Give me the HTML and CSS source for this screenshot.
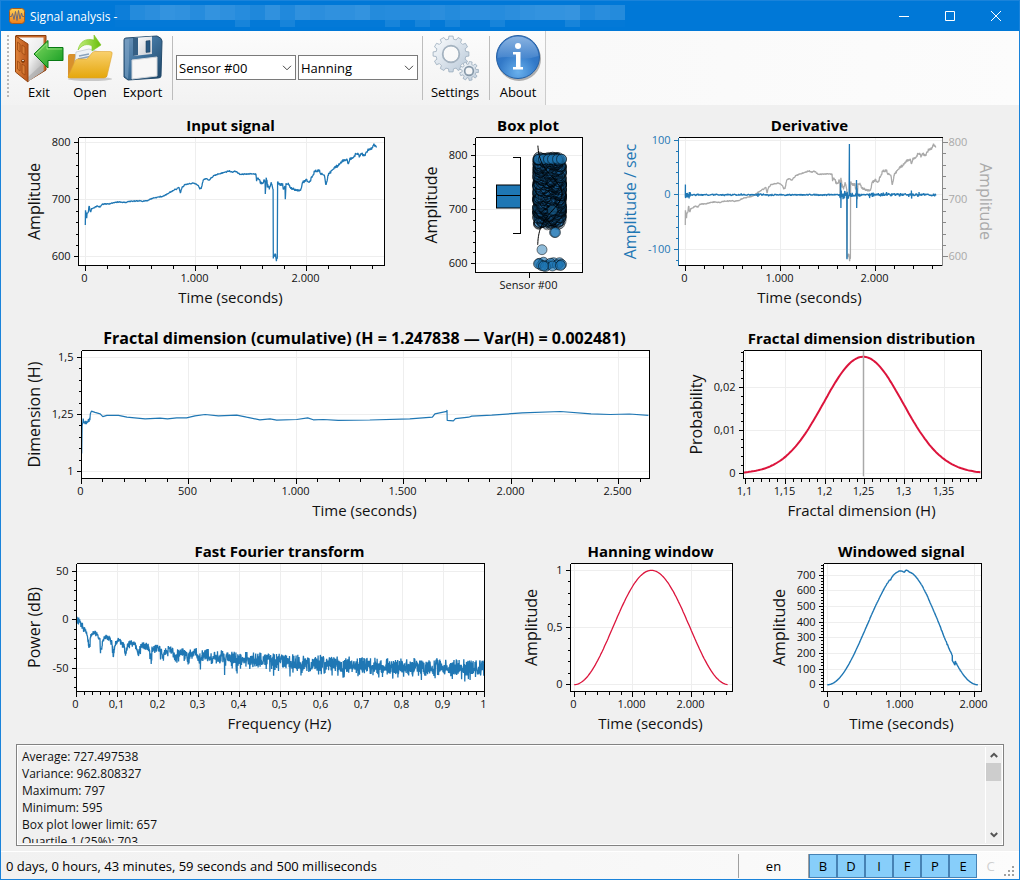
FILE: index.html
```html
<!DOCTYPE html>
<html lang="en">
<head>
<meta charset="utf-8">
<title>Signal analysis</title>
<link rel="stylesheet" href="styles.css">
</head>
<body>
<div class="window">
  <header class="titlebar">
    <svg class="app-icon" viewBox="0 0 16 16" aria-hidden="true">
      <defs><linearGradient id="appg" x1="0" y1="0" x2="0" y2="1"><stop offset="0" stop-color="#ffd257"/><stop offset="1" stop-color="#f0801c"/></linearGradient></defs>
      <rect x=".5" y=".5" width="15" height="15" rx="3" fill="url(#appg)" stroke="#a85a1c"/>
      <path d="M1 8.500h1.500l1-3 1.500 6 1.500-8 1.500 9 1.500-10 1.500 8.500 1.500-6 1 3.500H15" fill="none" stroke="#6d6a78" stroke-width="1"/>
    </svg>
    <h1 class="caption">Signal analysis -</h1>
    <div class="mosaic" id="mosaic" aria-hidden="true"></div>
    <div class="window-buttons">
      <button aria-label="Minimize"><svg viewBox="0 0 10 10"><path d="M0 5.500H10"/></svg></button>
      <button aria-label="Maximize"><svg viewBox="0 0 10 10"><path d="M.5.5h9v9h-9z"/></svg></button>
      <button aria-label="Close"><svg viewBox="0 0 10 10"><path d="M0 0L10 10M10 0L0 10"/></svg></button>
    </div>
  </header>

  <div class="toolbar-area">
    <div class="toolbar" role="toolbar" aria-label="Main">
      <span class="grip"></span>
      <button class="tool">
        <svg viewBox="0 0 50 48">
          <defs>
            <linearGradient id="dw" x1="0" y1="0" x2="1" y2="1"><stop offset="0" stop-color="#fff"/><stop offset=".5" stop-color="#eee"/><stop offset="1" stop-color="#999"/></linearGradient>
            <linearGradient id="dd" x1="0" y1="0" x2="1" y2="0"><stop offset="0" stop-color="#e0853c"/><stop offset="1" stop-color="#b9541a"/></linearGradient>
            <linearGradient id="ga" x1="0" y1="0" x2="1" y2="1"><stop offset="0" stop-color="#80d860"/><stop offset="1" stop-color="#109a20"/></linearGradient>
          </defs>
          <path d="M2 .5H32V35L14 46z" fill="#c8692a" stroke="#8a3d0c"/>
          <path d="M5 2.500H29.500V36L14 46.500z" fill="url(#dw)"/>
          <path d="M14 42L29.500 28V36L14 46.500z" fill="#aaa" opacity=".6"/>
          <path d="M1.500 1L14 9V47L1.500 37z" fill="url(#dd)" stroke="#95450f"/>
          <path d="M3.500 7L6 9v8l-2.500-2zM8 10l3 2v8l-3-2zM3.500 26L6 28v8l-2.500-2zM8 29l3 2v9l-3-2z" fill="#d97c35" stroke="#9c4a12" stroke-width=".8"/>
          <circle cx="9" cy="26" r="1.800" fill="#713000"/><circle cx="9" cy="25.500" r=".8" fill="#fff"/>
          <path d="M20 19L34 5.500V12.500H49V25.500H34V33z" fill="url(#ga)" stroke="#087a14"/>
          <path d="M22 19L33 8.500V14H48" fill="none" stroke="#a6eb8c" opacity=".7"/>
        </svg><span>Exit</span>
      </button>
      <button class="tool tool-open">
        <svg viewBox="0 0 48 48">
          <defs><linearGradient id="fo" x1="0" y1="0" x2="0" y2="1"><stop offset="0" stop-color="#f9d06d"/><stop offset="1" stop-color="#e5a70c"/></linearGradient>
          <linearGradient id="gr" x1="0" y1="0" x2="1" y2="0"><stop offset="0" stop-color="#c6ef80"/><stop offset="1" stop-color="#67bd0a"/></linearGradient></defs>
          <ellipse cx="24" cy="44" rx="22" ry="2" fill="#aaa" opacity=".6"/>
          <path d="M2 43V21q0-2 2-2h5l4 3h28v20z" fill="#d8912c"/>
          <path d="M10 17l13-3 14 4-2 16H8z" fill="#eef2f6" stroke="#bcc5d0" stroke-width=".7"/>
          <path d="M13 21l10-2M12 24l14-3M12 27l17-4M26 19l7 1M26 24h8" stroke="#8aa2bc" stroke-width="1.400"/>
          <path d="M2 42L9 26q1-2 3-2h9l5-6q1-1.500 3-1.500h15q3 0 2 3L41 41q-1 2-3 2H4q-2 0-2-1z" fill="url(#fo)" stroke="#dda330" stroke-width=".6"/>
          <path d="M12 15C14 6 20 3 28 5V0l7 10-9 6v-5C21 8 16 10 12 15z" fill="url(#gr)" stroke="#79c51e" stroke-width=".6"/>
        </svg><span>Open</span>
      </button>
      <button class="tool tool-export">
        <svg viewBox="0 0 48 48">
          <defs><linearGradient id="fl" x1="0" y1="0" x2="1" y2="1"><stop offset="0" stop-color="#7298bd"/><stop offset=".45" stop-color="#40739e"/><stop offset="1" stop-color="#1c4465"/></linearGradient>
          <linearGradient id="fm" x1="0" y1="0" x2="1" y2="1"><stop offset="0" stop-color="#fff"/><stop offset="1" stop-color="#c8cdd4"/></linearGradient></defs>
          <path d="M5 5Q5 3 7 3L38 1Q43 3 43 6L42 41Q42 43 39 43L9 45 5 42z" fill="url(#fl)" stroke="#244b6c"/>
          <path d="M14 3L33 1.500V19L14 21z" fill="url(#fm)"/><path d="M14 3l5-.4V20l-5 1z" fill="#355f84"/>
          <path d="M27 6l4-.4V17l-4 .4z" fill="#285780" stroke="#1c3f60" stroke-width=".6"/>
          <path d="M13 25L38 22V41L13 44z" fill="#f7f7f7" stroke="#d0d5da"/>
          <path d="M6 5L6 41L9 44L10 27V4z" fill="#7ba2c5" opacity=".6"/>
        </svg><span>Export</span>
      </button>
      <span class="sep"></span>
      <div class="combo"><select aria-label="Sensor"><option>Sensor #00</option></select><svg viewBox="0 0 10 6"><path d="M1 .8L5 4.800 9 .8"/></svg></div>
      <div class="combo"><select aria-label="Window function"><option>Hanning</option></select><svg viewBox="0 0 10 6"><path d="M1 .8L5 4.800 9 .8"/></svg></div>
      <span class="sep"></span>
      <button class="tool tool-settings">
        <svg viewBox="0 0 48 48">
          <defs><linearGradient id="ge" x1="0" y1="0" x2="1" y2="1"><stop offset="0" stop-color="#fdfeff"/><stop offset="1" stop-color="#b8c8d8"/></linearGradient></defs>
          <g stroke="#9aacbc" fill="url(#ge)">
            <path id="gear-big" stroke-width=".8" fill-rule="evenodd"/>
            <circle cx="20" cy="19" r="8.500" fill="none" stroke="#a4b2bf" stroke-width="1.400"/>
            <path id="gear-small" stroke-width=".8" fill-rule="evenodd"/>
            <circle cx="38" cy="36" r="4.500" fill="none" stroke="#8496a6" stroke-width="1.300"/>
          </g>
        </svg><span>Settings</span>
      </button>
      <span class="sep"></span>
      <button class="tool tool-about">
        <svg viewBox="0 0 48 48">
          <defs><radialGradient id="ab" cx=".5" cy=".85" r=".9"><stop offset="0" stop-color="#69b0ec"/><stop offset=".5" stop-color="#3279c8"/><stop offset="1" stop-color="#2f6ebd"/></radialGradient>
          <linearGradient id="as" x1="0" y1="0" x2="0" y2="1"><stop offset="0" stop-color="#a8c9ec"/><stop offset="1" stop-color="#4a88cf"/></linearGradient></defs>
          <circle cx="25" cy="24" r="22" fill="#666" opacity=".5"/>
          <circle cx="24" cy="22" r="21.500" fill="url(#ab)" stroke="#2560a4"/>
          <path d="M3.500 23A20.500 20.500 0 0 1 44.500 21Q33 25 24 23 12 21 3.500 23z" fill="url(#as)" opacity=".75"/>
          <circle cx="24" cy="11" r="3" fill="#fff"/><path d="M19 17h7.500v15H29v2.500H19V32h3V19.500h-3z" fill="#fff"/>
        </svg><span>About</span>
      </button>
    </div>
  </div>

  <main class="charts">
    <div class="row row-a">
      <figure class="chart" data-chart="input" aria-label="Input signal"></figure>
      <figure class="chart" data-chart="box" aria-label="Box plot"></figure>
      <figure class="chart" data-chart="derivative" aria-label="Derivative"></figure>
    </div>
    <div class="row row-b">
      <figure class="chart" data-chart="fractal" aria-label="Fractal dimension"></figure>
      <figure class="chart" data-chart="distribution" aria-label="Fractal dimension distribution"></figure>
    </div>
    <div class="row row-c">
      <figure class="chart" data-chart="fft" aria-label="Fast Fourier transform"></figure>
      <figure class="chart" data-chart="hanning" aria-label="Hanning window"></figure>
      <figure class="chart" data-chart="windowed" aria-label="Windowed signal"></figure>
    </div>
  </main>

  <section class="results">
    <textarea readonly aria-label="Results">Average: 727.497538
Variance: 962.808327
Maximum: 797
Minimum: 595
Box plot lower limit: 657
Quartile 1 (25%): 703</textarea>
    <div class="scrollbar">
      <button aria-label="Scroll up"><svg viewBox="0 0 8 6"><path d="M.8 5L4 1.800 7.200 5"/></svg></button>
      <span class="thumb"></span>
      <button class="down" aria-label="Scroll down"><svg viewBox="0 0 8 6"><path d="M.8 1L4 4.200 7.200 1"/></svg></button>
    </div>
  </section>

  <footer class="statusbar">
    <span class="elapsed">0 days, 0 hours, 43 minutes, 59 seconds and 500 milliseconds</span>
    <button class="lang">en</button>
    <div class="flags">
      <button>B</button><button>D</button><button>I</button><button>F</button><button>P</button><button>E</button>
    </div>
    <button class="flag-off" disabled>C</button>
    <svg class="size-grip" viewBox="0 0 12 12" aria-hidden="true"><path d="M8 0h2v2h-2zM4 4h2v2h-2zM8 4h2v2h-2zM0 8h2v2h-2zM4 8h2v2h-2zM8 8h2v2h-2z"/></svg>
  </footer>
</div>
<script src="charts.js"></script>
</body>
</html>
```

FILE: styles.css
```css
* { box-sizing: border-box; }
body { margin: 0; background: #f0f0f0; color: #000; font: 13px "Open Sans", "Noto Sans", sans-serif; }
button { border: 0; padding: 0; background: none; font: inherit; color: inherit; }
.window { display: flex; flex-direction: column; min-height: 100vh; border: 1px solid #1a83da; border-top: 0; }

.titlebar { display: flex; align-items: center; height: 31px; background: #0078d7; border-top: 1px solid #1a83da; color: #fff; }
.app-icon { width: 16px; height: 16px; margin: 0 5px 0 8px; }
.caption { margin: 0; font-size: 12px; font-weight: 400; white-space: pre; }
.mosaic { display: grid; grid-template-columns: repeat(34, 15px); grid-template-rows: 15px 7px; align-self: flex-start; margin: 4px 0 0 -2px; }
.window-buttons { display: flex; margin-left: auto; }
.window-buttons button { width: 46px; height: 30px; display: grid; place-items: center; }
.window-buttons svg { width: 10px; height: 10px; overflow: visible; fill: none; stroke: #fff; }

.toolbar-area { display: flex; height: 74px; background: linear-gradient(90deg, #f5f5f5, #fcfcfc); }
.toolbar { display: flex; align-items: flex-start; height: 74px; padding: 4px 2px 0 6px; background: linear-gradient(#fcfcfc, #f2f2f2); border-right: 1px solid #ccc; }
.grip { width: 2px; height: 63px; margin-right: 5px; background: repeating-linear-gradient(#b8b8b8 0 2px, transparent 2px 4px); }
.tool { display: flex; flex-direction: column; align-items: center; width: 50px; }
.tool svg { display: block; width: 50px; height: 48px; }
.tool span { font-size: 13px; line-height: 18px; }
.tool-open { width: 52px; }
.tool-open svg, .tool-export svg, .tool-settings svg, .tool-about svg { width: 48px; }
.tool-export { width: 53px; }
.tool-settings { width: 58px; margin-right: 2px; }
.sep { width: 1px; height: 64px; margin: 1px 3px; background: #bdbdbd; }
.combo { position: relative; width: 120px; height: 25px; margin: 20px 2px 0 0; }
.combo + .sep { margin-left: 2px; }
.combo select { width: 100%; height: 100%; appearance: none; border: 1px solid #7a7a7a; border-radius: 0; background: #fff; color: #000; padding: 0 2px; font: 13px "Open Sans", "Noto Sans", sans-serif; }
.combo svg { position: absolute; right: 4px; top: 10px; width: 10px; height: 6px; fill: none; stroke: #444; pointer-events: none; }

.charts { display: flex; flex: 1; flex-direction: column; padding: 0 10px 0 15px; }
.row { display: grid; flex: 1; min-height: 213px; }
.row-a { grid-template-columns: 2fr 1fr 2fr; }
.row-b { grid-template-columns: 2fr 1fr; }
.row-c { grid-template-columns: 2fr 1fr 1fr; }
.chart { margin: 0; min-width: 0; overflow: hidden; }
.chart svg { display: block; width: 100%; height: 100%; }
.chart text { fill: #111; text-anchor: middle; }
.chart .title { font-size: 15px; font-weight: 700; fill: #000; }
.chart .title-long { font-size: 16px; }
.chart .label { font-size: 15px; }
.chart .side { font-size: 16px; }
.chart .tick { font-size: 11px; }
.chart .end { text-anchor: end; }
.chart .start { text-anchor: start; }
.chart .blue { fill: #1f77b4; }
.chart .gray { fill: #a9a9a9; }

.results { display: flex; height: 102px; margin: 0 15px; border: 1px solid #828282; padding: 2px 1px 2px 1px; background: #f0f0f0; box-shadow: inset 0 0 0 1px #fff; }
.results textarea { flex: 1; resize: none; border: 0; outline: 0; overflow: hidden; padding: 1px 4px; background: transparent; color: #111; font: 12px/17px "Open Sans", "Noto Sans", sans-serif; }
.scrollbar { display: flex; flex-direction: column; width: 17px; border-left: 1px solid #fff; padding-right: 1px; }
.scrollbar button { height: 16px; display: grid; place-items: center; }
.scrollbar svg { width: 8px; height: 6px; fill: none; stroke: #555; stroke-width: 2; }
.thumb { height: 18px; background: #cdcdcd; }
.scrollbar .down { margin-top: auto; }

.statusbar { display: flex; align-items: center; height: 28px; margin-top: 5px; border-top: 1px solid #fff; padding: 2px 3px 1px 5px; background: linear-gradient(90deg, #f1f1f1, #fcfcfc); }
.elapsed { margin-right: auto; }
.lang { width: 70px; height: 24px; border-left: 1px solid #a0a0a0; }
.flags { display: flex; border-left: 1px solid #a0a0a0; }
.flags button { width: 28px; height: 24px; border: 1px solid #4682b4; background: #87cefa; }
.flag-off { width: 27px; color: #d0d0d0; }
.size-grip { width: 12px; height: 12px; align-self: flex-end; fill: #a0a0a0; }
```

FILE: charts.js
```js
const BLUE = '#1f77b4', GRAY = '#a9a9a9', RED = '#dc143c', BLACK = '#000';

function random(seed) {
  let s = seed;
  return () => { s = (s * 1664525 + 1013904223) % 4294967296; return s / 4294967296; };
}
function range(a, b, step) {
  const out = [];
  for (let i = Math.ceil(a / step - 1e-9); i * step <= b + 1e-9; i++) out.push(+(i * step).toFixed(6));
  return out;
}
function interpolate(pts, x) {
  let i = 1;
  while (i < pts.length - 1 && pts[i][0] < x) i++;
  const [x0, y0] = pts[i - 1], [x1, y1] = pts[i];
  return x1 === x0 ? y1 : y0 + (y1 - y0) * (x - x0) / (x1 - x0);
}
const format = v => Math.abs(v) >= 1000 ? (v / 1000).toFixed(3) : String(v).replace('.', ',');

const signalKeys = [[0,658],[1,678],[12,671],[24,681],[36,685],[48,678],[60,684],[109,689],[133,687],[151,692],[223,693],[299,696],[359,695],[404,697],[555,698],[615,703],[706,706],[766,713],[848,721],[860,712],[875,721],[902,726],[977,729],[1023,725],[1035,719],[1050,720],[1068,735],[1092,737],[1119,734],[1158,741],[1204,745],[1249,747],[1300,750],[1333,748],[1357,750],[1400,744],[1475,745],[1541,745],[1550,735],[1566,738],[1587,730],[1626,733],[1629,712],[1638,741],[1647,725],[1665,719],[1683,727],[1700,721],[1701,600],[1710,600],[1722,605],[1729,595],[1738,595],[1740,728],[1786,726],[1798,716],[1807,724],[1810,700],[1816,729],[1837,728],[1867,719],[1897,717],[1943,716],[1973,731],[2003,735],[2024,729],[2048,738],[2078,750],[2118,751],[2127,744],[2160,745],[2178,727],[2199,743],[2244,754],[2290,760],[2329,768],[2365,771],[2380,764],[2395,771],[2431,776],[2465,781],[2480,775],[2500,781],[2525,776],[2561,787],[2591,789],[2612,796],[2636,793]];

function makeSignal() {
  const r = random(7);
  const times = new Set(signalKeys.map(k => k[0]));
  for (let t = 0; t < 2636; t += 4) times.add(t);
  return [...times].sort((a, b) => a - b).map(t => {
    const amp = t < 60 ? 8 : t > 1820 ? 5 : t > 1540 ? 7 : 2;
    return [t, interpolate(signalKeys, t) + (r() - .5) * amp];
  });
}
const signal = makeSignal();

function makeDerivative() {
  const r = random(19), out = [];
  for (let t = 0; t <= 2636; t += 4) {
    const amp = t < 60 ? 10 : t > 1625 && t < 1720 ? 14 : t > 1720 && t < 1840 ? 8 : t > 1930 ? (r() > .8 ? 8 : 5) : (r() > .93 ? 6 : 3);
    out.push([t, (r() - .5) * amp]);
  }
  const spikes = [[0.5,19],[1,-5],[40,-7],[42,5],[764,-4],[766,3],[1634,22],[1638,-24],[1642,8],[1660,-8],[1699,2],[1702,-118],[1705,3],[1724,0],[1727,93],[1731,0],[1802,27],[1804,-24],[1807,12],[1940,-6],[2118,5],[2380,8],[2382,-7],[2460,5]];
  return out.concat(spikes).sort((a, b) => a[0] - b[0]);
}

const fractalKeys = [[1,1.08],[3,1.2],[6,1.215],[8,1.232],[11,1.212],[14,1.22],[17,1.208],[20,1.222],[23,1.208],[26,1.22],[29,1.214],[32,1.23],[35,1.217],[37,1.235],[39,1.225],[41,1.252],[46,1.265],[63,1.259],[87,1.253],[99,1.241],[118,1.246],[172,1.246],[211,1.238],[296,1.231],[365,1.234],[400,1.231],[443,1.235],[489,1.235],[528,1.244],[575,1.25],[637,1.244],[722,1.247],[768,1.238],[830,1.227],[877,1.231],[908,1.225],[1001,1.228],[1052,1.235],[1078,1.227],[1125,1.228],[1194,1.224],[1341,1.226],[1527,1.231],[1632,1.238],[1644,1.253],[1699,1.264],[1700,1.27],[1701,1.224],[1730,1.222],[1739,1.232],[1801,1.238],[1815,1.243],[1908,1.247],[2050,1.257],[2228,1.263],[2370,1.253],[2459,1.25],[2548,1.252],[2637,1.246]];
const bell = [];
for (let x = 1.097; x <= 1.397; x += .002) bell.push([x, .0271 * Math.exp(-((x - 1.2478) ** 2) / (2 * .0498 ** 2))]);

function makeSpectrum() {
  const r = random(41), out = [];
  const top = [[0,5],[.01,0],[.022,-8],[.035,-11],[.07,-15],[.1,-19],[.14,-21],[.2,-25],[.26,-28],[.32,-30],[.4,-32],[.6,-36],[.75,-39],[1,-40]];
  for (let f = 0; f <= 1; f += .0006) {
    const lobe = f < .02 ? 0 : 20 * Math.log10(Math.abs(Math.sin(Math.PI * f / .0303)) + .16);
    const weight = Math.max(0, 1 - f / .48);
    const n = -Math.log(r() + .001);
    const spread = 3 + 12 * Math.min(1, f / .55);
    const noise = f < .02 ? 8 * r() : spread * r() + Math.min(18, n * (Math.min(2.6, 6 * f + .3) + (lobe < -7 ? 3.5 * weight : 0)));
    out.push([f, interpolate(top, f) + lobe * weight - noise]);
  }
  return out;
}
const hann = (t, n) => (1 - Math.cos(2 * Math.PI * t / n)) / 2;

const timeTicks = { major: 1000, minor: 200, label: 'Time (seconds)' };
const charts = {
  input: { title: 'Input signal', left: 62, right: 29, x: { ...timeTicks, domain: [-62, 2708] }, y: { domain: [585, 808.5], major: 100, minor: 20, label: 'Amplitude' },
    series: [{ color: BLUE, width: 1.3, data: signal }] },
  box: { title: 'Box plot', left: 62, right: 30, bottom: 46, category: 'Sensor #00', x: { domain: [0, 107] }, y: { domain: [584, 833], major: 100, minor: 20, label: 'Amplitude' }, series: [] },
  derivative: { title: 'Derivative', left: 66, right: 67, x: { ...timeTicks, domain: [-72, 2707] }, y: { domain: [-129.5, 105], major: 100, minor: 20, label: 'Amplitude / sec', color: BLUE, css: 'blue' },
    y2: { domain: [585, 808.5], major: 100, minor: 20, label: 'Amplitude' },
    series: [{ color: GRAY, width: 1.3, data: signal, second: true }, { color: BLUE, width: 1.3, data: makeDerivative() }] },
  fractal: { title: 'Fractal dimension (cumulative) (H = 1.247838 \u2014 Var(H) = 0.002481)', titleCss: 'title-long', left: 65, right: 29, x: { domain: [0, 2642], major: 500, minor: 100, label: 'Time (seconds)' }, y: { domain: [.97, 1.53], major: .25, minor: .05, label: 'Dimension (H)' },
    series: [{ color: BLUE, width: 1.2, data: fractalKeys }] },
  distribution: { title: 'Fractal dimension distribution', left: 65, right: 28, x: { domain: [1.0974, 1.3964], major: .05, minor: .01, label: 'Fractal dimension (H)' }, y: { domain: [-.0011, .02855], major: .01, minor: .002, label: 'Probability' },
    series: [{ color: RED, width: 2, data: bell }, { color: GRAY, width: 1.3, data: [[1.248, -.0006], [1.248, .0284]] }] },
  fft: { title: 'Fast Fourier transform', left: 60, right: 29, x: { domain: [0, 1], major: .1, minor: .02, label: 'Frequency (Hz)' }, y: { domain: [-74, 58], major: 50, minor: 10, label: 'Power (dB)' },
    series: [{ color: BLUE, width: 1.3, data: makeSpectrum() }] },
  hanning: { title: 'Hanning window', left: 57, right: 29, x: { ...timeTicks, domain: [-63, 2703] }, y: { domain: [-.06, 1.06], major: .5, minor: .1, label: 'Amplitude' },
    series: [{ color: RED, width: 1.3, data: range(0, 2637, 20).map(t => [t, hann(t, 2637)]) }] },
  windowed: { title: 'Windowed signal', left: 62, right: 28, x: { ...timeTicks, domain: [-52, 2098] }, y: { domain: [-43, 774], major: 100, minor: 20, label: 'Amplitude' },
    series: [{ color: BLUE, width: 1.4, data: signal.filter(p => p[0] <= 2048).map(([t, v]) => [t, v * hann(t, 2048)]) }] }
};

function drawBox(sx, sy) {
  const r = random(5);
  let s = '';
  const dot = (x, v, o) => { s += `<circle cx="${sx(x).toFixed(1)}" cy="${sy(v).toFixed(1)}" r="5" fill="${BLUE}" fill-opacity="${o}" stroke="#000" stroke-opacity=".5"/>`; };
  for (let t = 0; t < 2636; t += 1.5) {
    const v = interpolate(signal, t);
    if (v > 672 && v < 797) dot(62 + r() * 24, v, .3);
  }
  for (let i = 0; i < 330; i++) dot(62 + r() * 24, 672 + i * .38, .12);
  for (const x of [63, 68, 73, 77, 82, 86]) dot(x, 793, .7);
  for (const [x, v] of [[64,601],[68,603],[72,598],[78,602],[84,602],[66,597],[75,601],[82,598],[63,600],[86,599],[70,595],[77,596],[85,597],[68,596]]) dot(x, v, .65);
  dot(79, 658, .6); dot(80, 658, .6); dot(77, 699, .5); dot(66.5, 626, .5);
  const curve = [];
  for (let v = 818; v >= 634; v -= 3) curve.push(`${sx(62 + 24.5 * Math.exp(-((v - 729) ** 2) / 1900)).toFixed(1)},${sy(v).toFixed(1)}`);
  s += `<polyline points="${curve.join(' ')}" fill="none" stroke="#000"/>`;
  const y = v => Math.round(sy(v)), x0 = sx(21), x1 = sx(45);
  s += `<rect x="${x0}" y="${y(746)}" width="${x1 - x0}" height="${y(703) - y(746)}" fill="${BLUE}" stroke="#000"/>`;
  s += `<path d="M${x0} ${y(727)}H${x1}M${x1 - 8} ${y(797)}H${x1}V${y(657)}H${x1 - 8}" fill="none" stroke="#000" shape-rendering="crispEdges"/>`;
  return s;
}

function draw(el) {
  const c = charts[el.dataset.chart];
  const w = el.clientWidth, h = el.clientHeight;
  const L = c.left + .5, R = w - c.right + .5, T = 32.5, B = Math.round(h - (c.bottom || 53)) + .5;
  const scale = (d, a, b) => v => a + (v - d[0]) / (d[1] - d[0]) * (b - a);
  const sx = scale(c.x.domain, L, R), sy = scale(c.y.domain, B, T);
  const sy2 = c.y2 && scale(c.y2.domain, B, T);
  const snap = v => Math.floor(v) + .5;
  const middle = (L + R) / 2 - 1;
  const lines = (d, color) => `<path d="${d}" stroke="${color}" fill="none" shape-rendering="crispEdges"/>`;
  let s = `<rect x="${L}" y="${T}" width="${R - L}" height="${B - T}" fill="#fff"/>`;
  let grid = '', tx = '', ty = '', ty2 = '', text = '';
  if (c.x.major) {
    for (const v of range(...c.x.domain, c.x.major)) {
      const x = snap(sx(v));
      grid += `M${x} ${T}V${B}`; tx += `M${x} ${B}v5`;
      text += `<text class="tick" x="${x - 1}" y="${B + 16}">${format(v)}</text>`;
    }
    for (const v of range(...c.x.domain, c.x.minor)) tx += `M${snap(sx(v))} ${B}v3`;
    text += `<text class="label" x="${middle}" y="${B + 37}">${c.x.label}</text>`;
  } else {
    const x = snap((L + R) / 2);
    tx += `M${x} ${B}v5`;
    text += `<text class="tick" x="${x - 1}" y="${B + 16}">${c.category}</text>`;
  }
  for (const v of range(...c.y.domain, c.y.major)) {
    const y = snap(sy(v));
    grid += `M${L} ${y}H${R}`; ty += `M${L} ${y}h-5`;
    text += `<text class="tick end ${c.y.css || ''}" x="${L - 8}" y="${y + 3}">${format(v)}</text>`;
  }
  for (const v of range(...c.y.domain, c.y.minor)) ty += `M${L} ${snap(sy(v))}h-3`;
  if (c.y2) {
    for (const v of range(...c.y2.domain, c.y2.major)) {
      const y = snap(sy2(v));
      ty2 += `M${R} ${y}h5`;
      text += `<text class="tick start gray" x="${R + 6}" y="${y + 3}">${format(v)}</text>`;
    }
    for (const v of range(...c.y2.domain, c.y2.minor)) ty2 += `M${R} ${snap(sy2(v))}h3`;
    text += `<text class="label side gray" transform="translate(${R + 37} ${(T + B) / 2}) rotate(90)">${c.y2.label}</text>`;
  }
  s += lines(grid, '#eee');
  for (const p of c.series) {
    const f = p.second ? sy2 : sy;
    s += `<polyline fill="none" stroke="${p.color}" stroke-width="${p.width}" stroke-linejoin="bevel" points="${p.data.map(([x, y]) => sx(x).toFixed(1) + ',' + f(y).toFixed(1)).join(' ')}"/>`;
  }
  if (c.category) s += drawBox(v => L + v / 107 * (R - L), sy);
  s += lines(`M${L} ${T}H${R}M${L} ${B}H${R}` + tx, BLACK);
  s += lines(`M${L} ${T}V${B}` + ty, c.y.color || BLACK);
  s += lines(`M${R} ${T}V${B}` + ty2, c.y2 ? '#888' : BLACK);
  s += text + `<text class="title ${c.titleCss || ''}" x="${middle}" y="26">${c.title}</text>`;
  s += `<text class="label side ${c.y.css || ''}" transform="translate(24 ${(T + B) / 2}) rotate(-90)">${c.y.label}</text>`;
  el.innerHTML = `<svg>${s}</svg>`;
}
function drawAll() { document.querySelectorAll('.chart').forEach(draw); }

function gear(cx, cy, inner, outer, hole, teeth) {
  const pts = [];
  for (let i = 0; i < teeth; i++) for (const [f, r] of [[-.32, inner], [-.22, outer], [.22, outer], [.32, inner]]) {
    const a = (i + f) / teeth * 2 * Math.PI;
    pts.push(`${(cx + r * Math.cos(a)).toFixed(1)} ${(cy + r * Math.sin(a)).toFixed(1)}`);
  }
  return `M${pts.join('L')}zM${cx - hole} ${cy}a${hole} ${hole} 0 1 0 ${hole * 2} 0a${hole} ${hole} 0 1 0 ${-hole * 2} 0z`;
}
document.getElementById('gear-big').setAttribute('d', gear(20, 19, 15, 18, 8, 12));
document.getElementById('gear-small').setAttribute('d', gear(38, 36, 7, 9.5, 4, 9));

const mosaic = document.getElementById('mosaic');
const shade = random(3);
for (let i = 0; i < 68; i++) {
  const cell = document.createElement('span');
  const alpha = i < 34 ? (i === 0 ? .05 : .12 + shade() * .09) : (shade() > .72 ? .09 : .015);
  cell.style.background = `rgba(255, 255, 255, ${alpha.toFixed(2)})`;
  mosaic.append(cell);
}
drawAll();
addEventListener('resize', drawAll);
```
